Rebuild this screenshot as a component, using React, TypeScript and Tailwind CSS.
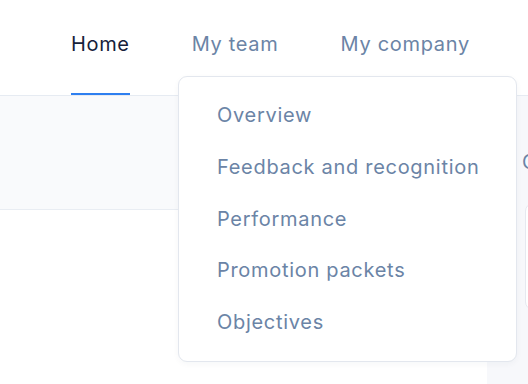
import React from 'react'

const font = { fontFamily: 'Inter, "Noto Sans", sans-serif' }

export default function App() {
  const tabs = [
    { label: 'Home', active: true },
    { label: 'My team', active: false },
    { label: 'My company', active: false },
  ]
  const menu = ['Overview', 'Feedback and recognition', 'Performance', 'Promotion packets', 'Objectives']

  return (
    <div className="relative w-[528px] h-[384px] overflow-hidden bg-white" style={font}>
      <header className="h-[96px] border-b border-[#e6ebf2] bg-white flex pl-[71px] gap-[62px]">
        {tabs.map((t) => (
          <div
            key={t.label}
            className={
              t.active
                ? 'h-full pt-[30px] border-b-2 border-[#2e7ff0] text-[20px] leading-[28px] text-[#16213a] tracking-[0.65px]'
                : 'h-full pt-[30px] text-[20px] leading-[28px] text-[#6b84a6] tracking-[0.7px]'
            }
          >
            {t.label}
          </div>
        ))}
      </header>

      <div className="flex h-[288px]">
        <section className="w-[487px] flex-shrink-0 bg-white">
          <div className="h-[114px] bg-[#f9fafc] border-b border-[#e9edf3]"></div>
        </section>
        <aside className="flex-grow bg-[#f7f8fb] pl-[35px] overflow-hidden">
          <div className="mt-[52px] text-[20px] leading-[28px] text-[#6b84a6] whitespace-nowrap">Objectives</div>
          <div className="mt-[27px] h-[107px] w-[200px] ml-[3px] bg-white border border-[#e6e9f0] rounded-lg"></div>
        </aside>
      </div>

      <div className="absolute left-[178px] top-[76px] w-[339px] h-[286px] bg-white border border-[#e3e7ee] rounded-[9px] shadow-[0_2px_6px_rgba(20,40,80,0.04)] pt-[24px] pl-[38px]">
        <ul className="flex flex-col gap-[23.75px]">
          {menu.map((m) => (
            <li key={m} className="text-[20px] leading-[28px] text-[#6b84a6] tracking-[0.7px] whitespace-nowrap">
              {m}
            </li>
          ))}
        </ul>
      </div>
    </div>
  )
}
